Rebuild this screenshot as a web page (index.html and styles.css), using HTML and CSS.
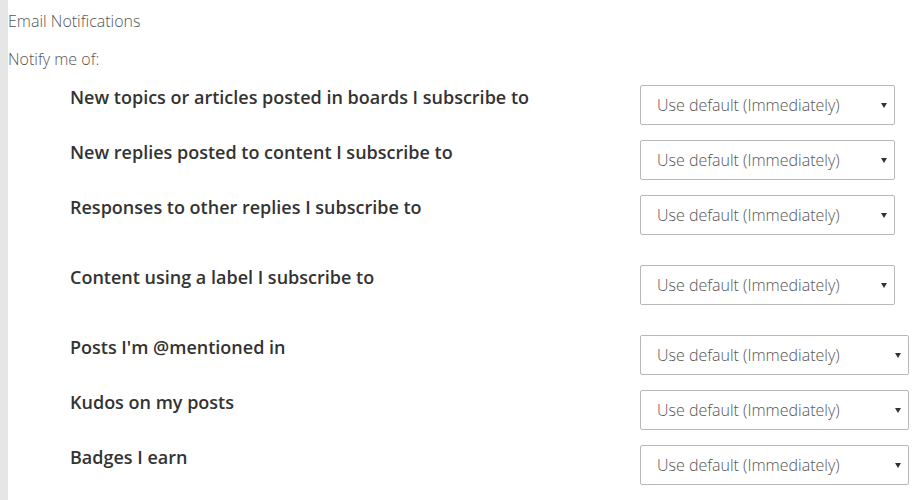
FILE: index.html
```html
<!DOCTYPE html>
<html lang="en">
<head>
<meta charset="utf-8">
<title>Email Notifications</title>
<link rel="stylesheet" href="styles.css">
</head>
<body>
<div class="page">
  <div class="section-title">Email Notifications</div>
  <div class="intro">Notify me of:</div>
  <div class="rows">
    <div class="row">
      <label class="label">New topics or articles posted in boards I subscribe to</label>
      <div class="select-wrap"><select class="select"><option>Use default (Immediately)</option></select></div>
    </div>
    <div class="row">
      <label class="label">New replies posted to content I subscribe to</label>
      <div class="select-wrap"><select class="select"><option>Use default (Immediately)</option></select></div>
    </div>
    <div class="row">
      <label class="label">Responses to other replies I subscribe to</label>
      <div class="select-wrap"><select class="select"><option>Use default (Immediately)</option></select></div>
    </div>
    <div class="row row-spaced">
      <label class="label">Content using a label I subscribe to</label>
      <div class="select-wrap"><select class="select"><option>Use default (Immediately)</option></select></div>
    </div>
    <div class="row row-spaced row-wide">
      <label class="label">Posts I'm @mentioned in</label>
      <div class="select-wrap"><select class="select"><option>Use default (Immediately)</option></select></div>
    </div>
    <div class="row row-wide">
      <label class="label">Kudos on my posts</label>
      <div class="select-wrap"><select class="select"><option>Use default (Immediately)</option></select></div>
    </div>
    <div class="row row-wide">
      <label class="label">Badges I earn</label>
      <div class="select-wrap"><select class="select"><option>Use default (Immediately)</option></select></div>
    </div>
  </div>
</div>
</body>
</html>
```

FILE: styles.css
```css
html, body {
  margin: 0;
  padding: 0;
  background: #ffffff;
}

body {
  font-family: "Open Sans", "Noto Sans", sans-serif;
  color: #333333;
}

.page {
  min-height: 100vh;
  box-sizing: border-box;
  border-left: 8px solid #e6e6e6;
  padding-top: 10px;
}

.section-title,
.intro {
  font-size: 16px;
  font-weight: 300;
  color: #555555;
  line-height: 22px;
}

.intro {
  margin-top: 16px;
}

.rows {
  margin-top: 15px;
  display: flex;
  flex-direction: column;
  gap: 15px;
}

.row {
  display: grid;
  grid-template-columns: 570px 255px;
  align-items: start;
  padding-left: 62px;
}

.row-spaced {
  margin-top: 15px;
}

.row-wide {
  grid-template-columns: 570px 269px;
}

.label {
  font-size: 18px;
  font-weight: 600;
  line-height: 24px;
  color: #333333;
}

.select-wrap {
  position: relative;
  height: 40px;
}

.select-wrap::after {
  content: "";
  position: absolute;
  right: 8px;
  top: 18px;
  border-left: 3px solid transparent;
  border-right: 3px solid transparent;
  border-top: 5px solid #333333;
  pointer-events: none;
}

.select {
  appearance: none;
  -webkit-appearance: none;
  width: 100%;
  height: 40px;
  box-sizing: border-box;
  border: 1px solid #b8b8b8;
  border-radius: 2px;
  background: #ffffff;
  padding: 0 24px 0 16px;
  font-family: "Open Sans", "Noto Sans", sans-serif;
  font-size: 16px;
  font-weight: 300;
  color: #555555;
  outline: none;
}
```
